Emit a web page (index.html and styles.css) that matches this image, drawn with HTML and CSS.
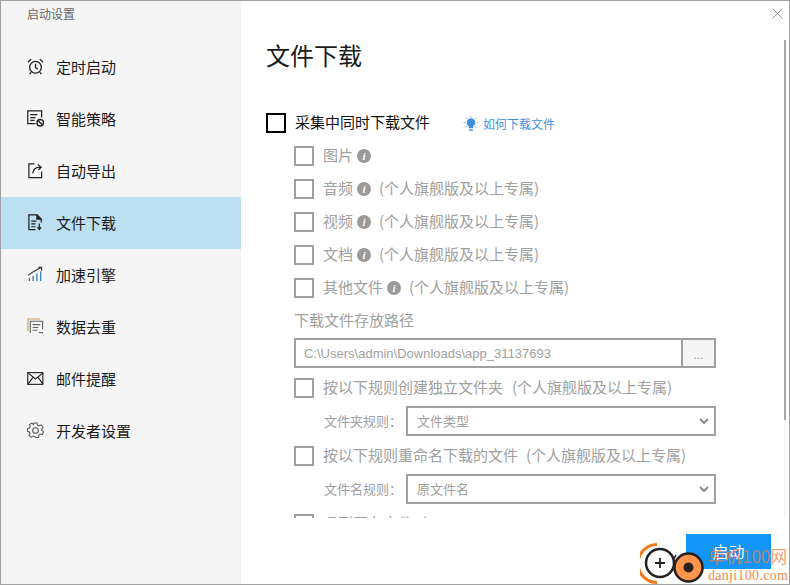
FILE: index.html
```html
<!DOCTYPE html>
<html lang="zh-CN">
<head>
<meta charset="utf-8">
<title>启动设置</title>
<link rel="stylesheet" href="styles.css">
</head>
<body>
<div class="window">
  <aside class="sidebar">
    <div class="side-title">启动设置</div>
    <nav class="nav">
      <div class="nav-item"><svg class="nav-icon" viewBox="0 0 18 18" fill="none" stroke="#222" stroke-width="1.400"><circle cx="9" cy="9.800" r="6.200"/><path d="M9 6V10.300L11.500 11.800M1 4.500L4.500 1.200M17 4.500L13.500 1.200M4.500 15L2.800 17M13.500 15L15.200 17"/></svg><span>定时启动</span></div>
      <div class="nav-item"><svg class="nav-icon" viewBox="0 0 18 18" fill="none" stroke="#222" stroke-width="1.300"><path d="M9 14.500H.8V1H15.500V8"/><path d="M3.500 5H11M3.500 8H9M3.500 11H8"/><circle cx="14" cy="13.500" r="3.400" stroke-width="1.500"/><path d="M11.800 11.300L16.200 15.700" stroke-width="1.500"/></svg><span>智能策略</span></div>
      <div class="nav-item"><svg class="nav-icon" viewBox="0 0 18 18" fill="none" stroke="#222" stroke-width="1.300"><path d="M8 2H2V16.500H15.500V10"/><path d="M6 12C6.500 8 9.500 5.500 14 5.500M11.500 2.500L15 5.500L12 8.500"/></svg><span>自动导出</span></div>
      <div class="nav-item active"><svg class="nav-icon" viewBox="0 0 18 18" fill="none" stroke="#222" stroke-width="1.300"><path d="M9 16.500H2V1H10.500L15 5.500V9"/><path d="M10.500 1V5.500H15Z" fill="#222"/><path d="M4.500 7.500H10M4.500 10.500H9M4.500 13.500H9M13 10V16M11 14L13 16.500L15 14"/></svg><span>文件下载</span></div>
      <div class="nav-item"><svg class="nav-icon" viewBox="0 0 18 18" fill="none" stroke="#333" stroke-width="1.200"><path d="M1.500 10C4 7 8 5 15 1.500M12 1.500H15.500V5"/><path d="M2.500 16V13M6.500 16V10.500" stroke="#5a5a5a" stroke-width="1.300"/><path d="M10.500 16V8M14.500 16V5.500" stroke="#2a7ab8" stroke-width="1.300"/></svg><span>加速引擎</span></div>
      <div class="nav-item"><svg class="nav-icon" viewBox="0 0 18 18" fill="none" stroke="#666" stroke-width="1.200"><path d="M1 14V1H14" stroke="#c79a62"/><path d="M3.500 16V3.500H16.500V12"/><path d="M6 7H14M6 10H12M6 13H11M12.500 15.500H17"/></svg><span>数据去重</span></div>
      <div class="nav-item"><svg class="nav-icon" viewBox="0 0 18 18" fill="none" stroke="#222" stroke-width="1.200"><rect x=".8" y="2.800" width="16" height="12.400"/><path d="M1 3L9 9.500L17 3M1 15L6.500 7.500M17 15L11.500 7.500"/></svg><span>邮件提醒</span></div>
      <div class="nav-item"><svg class="nav-icon" viewBox="0 0 18 18" fill="none" stroke="#555" stroke-width="1.100"><circle cx="9" cy="9" r="3"/><path d="M7.500 1H10.500L11 3.300L13 4.200L15 3L17 5.500L15.600 7.400L15.800 9L17.500 10.500L16 13.300L13.800 12.800L12.500 14.200L12.300 16.500H9L8 15H6.300L4.500 16.300L2 14L3.200 12L2.500 10.500L.5 9.800V6.800L2.700 6.300L3.500 4.500L2.500 2.800L5.200 1.200L6.800 2.800Z"/></svg><span>开发者设置</span></div>
    </nav>
  </aside>
  <main class="main">
    <div class="close" aria-label="关闭"><svg viewBox="0 0 11 11" width="11" height="11" stroke="#8f8f8f" stroke-width="1"><path d="M.5 .5L10.500 10.500M10.500 .5L.5 10.500"/></svg></div>
    <div class="scrollbar"><div class="thumb"></div></div>
    <div class="scroll">
      <h1 class="heading">文件下载</h1>
      <div class="master">
        <label class="row"><span class="box box-main"></span><span class="master-text">采集中同时下载文件</span></label>
        <a class="howto"><svg viewBox="0 0 16 16" width="16" height="17"><path d="M8 2.800A4.300 4.300 0 0 0 5.800 10.700V12.800H10.200V10.700A4.300 4.300 0 0 0 8 2.800Z" fill="#3f8fd8"/><path d="M6.200 14.600H9.800" stroke="#3f8fd8" stroke-width="1.500"/><path d="M8 0V1.800M2.500 2L3.900 3.400M13.500 2L12.100 3.400M.5 7H2.500M13.500 7H15.500M2.600 11.800L4 10.800M13.400 11.800L12 10.800" stroke="#7fb4e2" stroke-width="1"/></svg><span>如何下载文件</span></a>
      </div>
      <div class="options">
        <div class="row opt"><span class="box"></span><span>图片</span><i class="info">i</i></div>
        <div class="row opt"><span class="box"></span><span>音频</span><i class="info">i</i><span class="pro">(个人旗舰版及以上专属)</span></div>
        <div class="row opt"><span class="box"></span><span>视频</span><i class="info">i</i><span class="pro">(个人旗舰版及以上专属)</span></div>
        <div class="row opt"><span class="box"></span><span>文档</span><i class="info">i</i><span class="pro">(个人旗舰版及以上专属)</span></div>
        <div class="row opt"><span class="box"></span><span>其他文件</span><i class="info">i</i><span class="pro">(个人旗舰版及以上专属)</span></div>
        <div class="path-label">下载文件存放路径</div>
        <div class="path"><span class="path-value">C:\Users\admin\Downloads\app_31137693</span><span class="path-btn">...</span></div>
        <div class="row rule"><span class="box"></span><span>按以下规则创建独立文件夹</span><span class="pro pro-wide">(个人旗舰版及以上专属)</span></div>
        <div class="select-row"><span class="select-label">文件夹规则：</span><div class="select"><span>文件类型</span><svg viewBox="0 0 10 6" width="10" height="6" fill="none" stroke="#8a8a8a" stroke-width="2"><path d="M1 1L5 5L9 1"/></svg></div></div>
        <div class="row rule"><span class="box"></span><span>按以下规则重命名下载的文件</span><span class="pro">(个人旗舰版及以上专属)</span></div>
        <div class="select-row"><span class="select-label">文件名规则：</span><div class="select"><span>原文件名</span><svg viewBox="0 0 10 6" width="10" height="6" fill="none" stroke="#8a8a8a" stroke-width="2"><path d="M1 1L5 5L9 1"/></svg></div></div>
        <div class="row rule"><span class="box"></span><span>遇到同名文件时</span></div>
      </div>
    </div>
    <div class="footer"><button class="start">启动</button></div>
    <div class="watermark">
      <svg class="wm-logo" viewBox="0 0 66 42" width="66" height="42">
        <path d="M17 2.500A19 19 0 0 0 17 40.500" fill="none" stroke="#f47a1f" stroke-width="3"/>
        <circle cx="20" cy="21" r="14" fill="#fff" stroke="#222" stroke-width="2.500"/>
        <path d="M15 21H25M20 16V26" stroke="#222" stroke-width="1.800"/>
        <path d="M36 13C33 17 33 24 35 27" fill="none" stroke="#222" stroke-width="1.500"/>
        <circle cx="48.500" cy="25.500" r="14" fill="#ff944d" stroke="#222" stroke-width="2.500"/>
        <circle cx="48.500" cy="25.500" r="5" fill="#2b2320"/>
      </svg>
      <div class="wm-text"><div class="wm-cn">单机100网</div><div class="wm-en">danji100.com</div></div>
    </div>
  </main>
</div>
</body>
</html>
```
FILE: styles.css
```css
* { box-sizing: border-box; }
html, body { margin: 0; padding: 0; }
body { width: 790px; height: 585px; overflow: hidden; background: #fff; font-family: "Noto Sans CJK SC", "Liberation Sans", sans-serif; }
.window { width: 790px; height: 585px; border: 1px solid #a0a0a0; display: flex; background: #fff; overflow: hidden; }
.sidebar { width: 240px; flex: none; background: #f5f5f5; }
.side-title { height: 40px; padding: 4px 0 0 26px; font-size: 12px; line-height: 18px; color: #666; }
.nav-item { height: 52px; display: flex; align-items: center; padding: 0 0 2px 26px; font-size: 15px; color: #1a1a1a; }
.nav-item.active { background: #bcdff2; }
.nav-icon { width: 17px; height: 17px; margin-right: 12px; flex: none; }
.main { flex: 1; position: relative; min-width: 0; display: flex; flex-direction: column; }
.close { position: absolute; left: 531px; top: 7px; width: 11px; height: 11px; line-height: 0; }
.scrollbar { position: absolute; left: 543px; top: 39px; width: 2px; height: 477px; background: #f4f4f4; }
.thumb { height: 380px; background: #a8a8a8; }
.scroll { height: 517px; flex: none; overflow: hidden; padding: 36px 0 0 25px; }
.heading { margin: 0; font-size: 24px; line-height: 36px; font-weight: 400; color: #1a1a1a; }
.master { display: flex; align-items: center; height: 20px; margin-top: 40px; }
.row { display: flex; align-items: center; }
.row > span:not(.box) { margin-bottom: 4px; }
.box { width: 20px; height: 20px; border: 2px solid #a0a0a0; background: #fff; flex: none; }
.box-main { border-color: #000; }
.master-text { margin-left: 9px; font-size: 15px; color: #111; }
.howto { display: flex; align-items: center; margin-left: 33px; font-size: 12px; color: #4a90d9; }
.howto span { margin-left: 4px; }
.options { padding-left: 28px; color: #a0a0a0; font-size: 15px; margin-top: 13px; }
.opt { height: 20px; margin-bottom: 13px; }
.opt > span:nth-child(2) { margin-left: 9px; }
.info { width: 14px; height: 14px; margin-left: 4px; border-radius: 50%; background: #9a9a9a; color: #fff; font: italic 700 11px/14px "Liberation Serif", serif; text-align: center; flex: none; }
.pro { margin-left: 8px; }
.row > .pro-wide { margin-left: 9px; }
.path-label { height: 20px; line-height: 20px; margin-top: -1px; }
.path { display: flex; width: 422px; height: 30px; margin-top: 8px; border: 2px solid #a0a0a0; }
.path-value { flex: 1; padding-left: 8px; font: 13px/28px "Liberation Sans", sans-serif; color: #a0a0a0; }
.path-btn { width: 33px; flex: none; background: #f5f5f5; border-left: 2px solid #a0a0a0; text-align: center; font: 12px/30px "Liberation Sans", sans-serif; }
.rule { height: 20px; margin-top: 10px; }
.rule > span:nth-child(2) { margin-left: 9px; }
.select-row { display: flex; align-items: center; height: 30px; margin-top: 8px; padding-left: 30px; font-size: 13px; }
.select-label { width: 82px; flex: none; margin-bottom: 2px; }
.select { flex: none; width: 310px; height: 30px; display: flex; align-items: center; justify-content: space-between; padding: 0 5px 0 9px; border: 2px solid #a0a0a0; font-size: 13px; }
.select span { margin-bottom: 2px; }
.footer { flex: 1; position: relative; display: flex; justify-content: flex-end; padding: 16px 18px 0 0; }
.start { width: 85px; height: 35px; border: 0; padding: 0 0 2px; background: #1296fa; color: #fff; font: 16px "Noto Sans CJK SC", sans-serif; }
.watermark { position: absolute; left: 399px; top: 541px; width: 150px; height: 42px; display: flex; pointer-events: none; }
.wm-logo { flex: none; }
.wm-text { margin-left: 2px; padding-top: 2px; }
.wm-cn { font: 17px/24px "Noto Sans CJK SC", sans-serif; color: rgba(244, 122, 50, .72); white-space: nowrap; }
.wm-en { font: 14px/16px "Liberation Serif", serif; color: #f58a4a; letter-spacing: .3px; white-space: nowrap; }
```
